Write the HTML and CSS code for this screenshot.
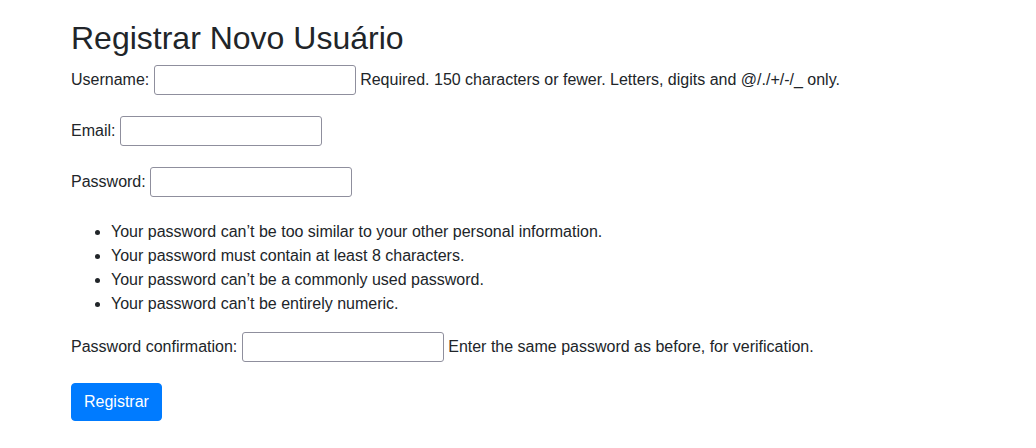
FILE: index.html
```html
<!DOCTYPE html>
<html lang="pt-br">
<head>
<meta charset="utf-8">
<title>Registrar Novo Usuário</title>
<link rel="stylesheet" href="styles.css">
</head>
<body>
<main class="page">
  <h2 class="title">Registrar Novo Usuário</h2>
  <form class="form">
    <p class="field"><label class="label" for="id_username">Username:</label> <input class="input" type="text" id="id_username"> <span class="help">Required. 150 characters or fewer. Letters, digits and @/./+/-/_ only.</span></p>
    <p class="field"><label class="label" for="id_email">Email:</label> <input class="input" type="email" id="id_email"></p>
    <p class="field"><label class="label" for="id_password1">Password:</label> <input class="input" type="password" id="id_password1"></p>
    <ul class="rules">
      <li>Your password can’t be too similar to your other personal information.</li>
      <li>Your password must contain at least 8 characters.</li>
      <li>Your password can’t be a commonly used password.</li>
      <li>Your password can’t be entirely numeric.</li>
    </ul>
    <p class="field"><label class="label" for="id_password2">Password confirmation:</label> <input class="input" type="password" id="id_password2"> <span class="help">Enter the same password as before, for verification.</span></p>
    <button class="btn" type="submit">Registrar</button>
  </form>
</main>
</body>
</html>
```

FILE: styles.css
```css
*, *::before, *::after { box-sizing: border-box; }

html, body {
  margin: 0;
  padding: 0;
  background: #fff;
}

body {
  font-family: "Liberation Sans", Arial, sans-serif;
  font-size: 16px;
  line-height: 1.5;
  color: #212529;
}

.page {
  padding: 18.6px 71px 0;
}

.title {
  margin: 0 0 8px;
  font-size: 32px;
  font-weight: 400;
  line-height: 1.2;
}

.form { margin: 0; }

.field {
  margin: 0 0 16px;
}

.label {
  display: inline-block;
  margin-bottom: 8px;
}

.input {
  display: inline-block;
  width: 202px;
  height: 30px;
  padding: 2px 3px;
  margin: 0;
  border: 1px solid #8f8f9d;
  border-radius: 3px;
  background: #fff;
  font: inherit;
  line-height: inherit;
  color: inherit;
}

.rules {
  margin: 0 0 16px;
  padding: 2px 0 0 40px;
}

.btn {
  display: inline-block;
  margin: 0;
  padding: 6px 12px;
  font: inherit;
  line-height: 1.5;
  color: #fff;
  background: #007bff;
  border: 1px solid #007bff;
  border-radius: 4px;
  cursor: pointer;
}
```
